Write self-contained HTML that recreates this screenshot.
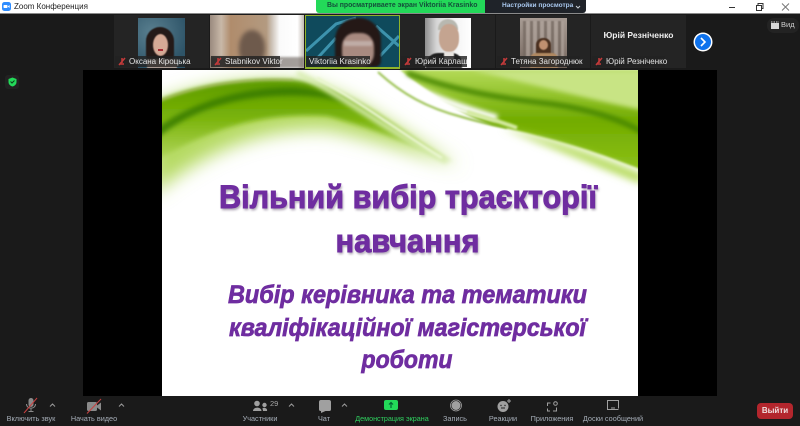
<!DOCTYPE html>
<html lang="uk"><head><meta charset="utf-8"><title>Zoom</title>
<style>
*{box-sizing:border-box}
html,body{margin:0;padding:0;width:800px;height:426px;overflow:hidden;background:#1a1a1a;font-family:"Liberation Sans",sans-serif}
.a{position:absolute}
.t{position:absolute;top:15px;height:53px;background:#242424;overflow:hidden}
.n{position:absolute;left:1px;bottom:1px;height:11px;background:rgba(34,34,34,.82);color:#e4e4e4;font-size:8px;line-height:11px;padding:0 2px 0 14px;white-space:nowrap}
.n svg{position:absolute;left:3px;top:1px}
.l{position:absolute;top:414px;color:#a6aeb8;font-size:7.3px;line-height:10px;white-space:nowrap;transform:translateX(-50%)}
.p{filter:blur(.6px)}
</style></head><body>
<div class="a" style="left:0;top:0;width:800px;height:13px;background:#fff"></div>
<div class="a" style="left:0;top:13px;width:800px;height:1px;background:#8a8a8a"></div>
<svg class="a" style="left:2px;top:2px" width="9" height="9" viewBox="0 0 9 9"><rect width="9" height="9" rx="2.5" fill="#2d8cff"/><rect x="1.5" y="3" width="4" height="3" rx=".7" fill="#fff"/><path d="M6 4.2 7.6 3v3L6 4.8z" fill="#fff"/></svg>
<div class="a" style="left:14px;top:2px;font-size:8px;line-height:10px;color:#222;white-space:nowrap">Zoom Конференция</div>
<div class="a" style="left:316px;top:0;width:169px;height:13px;background:#23d959;border-radius:0 0 0 3px;color:#14503a;font-size:6.9px;font-weight:bold;line-height:12px;padding-left:11px;white-space:nowrap">Вы просматриваете экран Viktoriia Krasinko</div>
<div class="a" style="left:485px;top:0;width:101px;height:13px;background:#1f2329;border-radius:0 0 3px 0;color:#a9c8ee;font-size:6.55px;font-weight:bold;line-height:12px;padding-left:17px;white-space:nowrap">Настройки просмотра</div>
<svg class="a" style="left:575px;top:5px" width="6" height="4"><path d="M1 1 3 3 5 1" fill="none" stroke="#c8d0d8"/></svg>
<svg class="a" style="left:727px;top:2px" width="70" height="10" fill="none" stroke="#333"><path d="M2 5.5H8"/><rect x="29.5" y="3.5" width="5" height="5"/><path d="M31 3V1.5H36V6.500H35"/><path d="M55 1.500 62 8.500M62 1.500 55 8.500" stroke="#777"/></svg>

<!-- thumbnails -->
<div class="t" style="left:114px;width:95px">
 <div class="a" style="left:24px;top:3px;width:47px;height:50px;background:radial-gradient(circle at 30% 30%,#5a8090,#2e5468 75%)"></div>
 <div class="a p" style="left:32px;top:12px;width:28px;height:36px;background:#241a18;border-radius:14px 14px 8px 8px"></div>
 <div class="a p" style="left:39px;top:19px;width:15px;height:22px;background:#d6aa96;border-radius:50%"></div>
 <div class="a" style="left:44px;top:34px;width:5px;height:2px;background:#a82c34"></div>
 <div class="a p" style="left:33px;top:44px;width:30px;height:9px;background:#ccb0a0"></div>
 <div class="n" style="width:75px"><svg width="9" height="9" fill="none" stroke="#c43a3a" stroke-width="1.500"><path d="M4 1v5M2 7h4M7 1 1 8"/></svg>Оксана Кіроцька</div>
</div>
<div class="t" style="left:210px;width:94px;background:linear-gradient(90deg,#9a8a7e 0,#c8b8a8 12%,#b08c6c 22%,#b39a80 60%,#cdc3b8 66%,#fafafa 74%,#fff 93%,#c0b8b0)">
 <div class="a" style="left:29px;top:15px;width:26px;height:34px;background:#6e5a4c;border-radius:50% 50% 40% 40%;filter:blur(2px)"></div>
 <div class="a" style="left:0;top:42px;width:94px;height:11px;background:#5a504a;opacity:.55;filter:blur(1px)"></div>
 <div class="n" style="width:69px"><svg width="9" height="9" fill="none" stroke="#c43a3a" stroke-width="1.500"><path d="M4 1v5M2 7h4M7 1 1 8"/></svg>Stabnikov Viktor</div>
</div>
<div class="t" style="left:305px;width:95px;background:#0f4a5c;border:1px solid #8fb32a">
 <svg class="a" style="left:0;top:0" width="93" height="51" fill="none" stroke="#3d93ad" stroke-width="3"><path d="M0 35 30 8 50 2M6 48 30 22 M70 10 93 30M74 40 93 20"/></svg>
 <div class="a" style="left:29px;top:2px;width:46px;height:49px;background:#241816;border-radius:22px 22px 6px 6px;filter:blur(1px)"></div>
 <div class="a" style="left:36px;top:17px;width:32px;height:34px;background:#a88a80;border-radius:40%;filter:blur(1px)"></div>
 <div class="a" style="left:38px;top:25px;width:28px;height:5px;background:#d0c4c0;opacity:.6;filter:blur(1px)"></div>
 <div class="n" style="left:0;bottom:0;width:64px;padding-left:3px">Viktoriia Krasinko</div>
</div>
<div class="t" style="left:400px;width:95px">
 <div class="a" style="left:25px;top:3px;width:46px;height:50px;background:linear-gradient(90deg,#8f8f8f,#d5d5d5 25%,#f0f0f0 55%,#fff)"></div>
 <div class="a p" style="left:38px;top:4px;width:20px;height:11px;background:#b8b8b0;border-radius:10px 10px 0 0"></div>
 <div class="a p" style="left:39px;top:9px;width:20px;height:28px;background:#c4a490;border-radius:45%"></div>
 <div class="a p" style="left:26px;top:38px;width:36px;height:15px;background:#1e1e1e;border-radius:12px 10px 0 0"></div>
 <div class="a p" style="left:44px;top:37px;width:10px;height:8px;background:#e8e4e0"></div>
 <div class="n" style="width:66px"><svg width="9" height="9" fill="none" stroke="#c43a3a" stroke-width="1.500"><path d="M4 1v5M2 7h4M7 1 1 8"/></svg>Юрий Карлаш</div>
</div>
<div class="t" style="left:496px;width:94px">
 <div class="a" style="left:24px;top:3px;width:47px;height:50px;background:linear-gradient(#a89c94,#8a7c74 60%,#6e6058)"></div>
 <div class="a p" style="left:27px;top:6px;width:41px;height:36px;background:repeating-linear-gradient(90deg,#746860 0 3px,#b0a49c 3px 7px);opacity:.7"></div>
 <div class="a p" style="left:40px;top:23px;width:15px;height:30px;background:#4a3020;border-radius:7px 7px 0 0"></div>
 <div class="a p" style="left:43px;top:25px;width:9px;height:10px;background:#c09070;border-radius:50%"></div>
 <div class="a p" style="left:34px;top:38px;width:28px;height:15px;background:#b08860;border-radius:6px 6px 0 0"></div>
 <div class="n" style="width:83px"><svg width="9" height="9" fill="none" stroke="#c43a3a" stroke-width="1.500"><path d="M4 1v5M2 7h4M7 1 1 8"/></svg>Тетяна Загороднюк</div>
</div>
<div class="t" style="left:591px;width:95px;color:#f0f0f0;font-size:8.5px;font-weight:bold;text-align:center;line-height:53px">
 <div class="a" style="left:0;top:-6px;width:95px">Юрій Резніченко</div>
 <div class="n" style="width:73px;font-weight:normal;text-align:left"><svg width="9" height="9" fill="none" stroke="#c43a3a" stroke-width="1.500"><path d="M4 1v5M2 7h4M7 1 1 8"/></svg>Юрій Резніченко</div>
</div>
<svg class="a" style="left:693px;top:32px" width="20" height="20"><circle cx="10" cy="10" r="9.500" fill="#fff"/><circle cx="10" cy="10" r="8" fill="#0e72ed"/><path d="M8 6 12 10 8 14" fill="none" stroke="#fff" stroke-width="1.600"/></svg>
<div class="a" style="left:767px;top:18px;width:32px;height:15px;background:#232323;border-radius:7px"></div>
<svg class="a" style="left:771px;top:21px" width="9" height="8"><rect y="2" width="8" height="6" fill="#d8d8d8"/><path d="M0 1H8" stroke="#d8d8d8" stroke-dasharray="1.500 1"/></svg>
<div class="a" style="left:781px;top:20px;font-size:7.5px;line-height:10px;color:#d0d0d0">Вид</div>
<div class="a" style="left:5px;top:75px;width:14px;height:14px;background:#222;border-radius:3px"></div>
<svg class="a" style="left:8px;top:77px" width="9" height="10"><path d="M4.500 .5 8.500 2V5C8.500 7.500 6.500 9 4.500 9.500 2.500 9 .5 7.500 .5 5V2z" fill="#23d959"/><path d="M2.500 4.500 4 6 6.500 3.500" fill="none" stroke="#0b3d1c"/></svg>

<!-- slide -->
<div class="a" style="left:83px;top:70px;width:634px;height:326px;background:#000"></div>
<svg class="a" style="left:162px;top:70px" width="476" height="326" viewBox="0 0 476 326">
 <defs>
  <filter id="b0" x="-20%" y="-40%" width="140%" height="180%"><feGaussianBlur stdDeviation="9"/></filter>
  <filter id="b1" x="-20%" y="-40%" width="140%" height="180%"><feGaussianBlur stdDeviation="4"/></filter>
  <filter id="b2" x="-20%" y="-40%" width="140%" height="180%"><feGaussianBlur stdDeviation="2.500"/></filter>
  <filter id="b3" x="-20%" y="-40%" width="140%" height="180%"><feGaussianBlur stdDeviation="1"/></filter>
  <filter id="s" x="-5%" y="-20%" width="110%" height="140%"><feGaussianBlur stdDeviation="1.200"/></filter>
  <linearGradient id="lg" x1="0" y1="0" x2="0" y2="1"><stop offset="0" stop-color="#5c9a00"/><stop offset=".45" stop-color="#78b208"/><stop offset="1" stop-color="#b4d860"/></linearGradient>
  <linearGradient id="rg" x1="0" y1="0" x2="0" y2="1"><stop offset="0" stop-color="#b4da58"/><stop offset=".5" stop-color="#72ac00"/><stop offset="1" stop-color="#8cc018"/></linearGradient>
  <clipPath id="cp"><rect width="476" height="326"/></clipPath>
 </defs>
 <rect width="476" height="326" fill="#fff"/>
 <g clip-path="url(#cp)">
  <path d="M-10 35C40 14 90 10 131 12C190 18 240 66 298 95C262 88 225 72 165 60C100 58 45 80 -10 125Z" fill="#b6da64" filter="url(#b0)"/>
  <path d="M-5 31C40 12 90 8 131 10C190 15 240 66 292 92C262 82 220 60 165 46C100 42 50 58 -5 90Z" fill="url(#lg)" filter="url(#b2)"/>
  <path d="M-5 58C30 32 80 17 131 17C155 18 170 25 185 33C160 25 130 24 100 27C60 31 25 44 -5 68Z" fill="#387a00" opacity=".85" filter="url(#b2)"/>
  <path d="M-5 32C40 13 90 8 131 10" fill="none" stroke="#a8b060" stroke-width="1" filter="url(#b3)"/>
  <path d="M135 3C180 25 240 70 285 92" fill="none" stroke="#d8edb0" stroke-width="5" filter="url(#b2)"/>
  <path d="M155 8C195 30 235 60 280 88" fill="none" stroke="#eaf6d0" stroke-width="3" filter="url(#b3)"/>
  <path d="M238 0H480V100C440 84 400 70 330 55C300 45 270 25 238 0Z" fill="url(#rg)" filter="url(#b3)"/>
  <path d="M340 58C400 72 440 88 480 104V114C440 98 390 78 340 58Z" fill="#b4da58" filter="url(#b1)"/>
  <path d="M310 0H480V40C430 30 370 14 310 0Z" fill="#c8e484" filter="url(#b2)"/>
  <path d="M245 3C290 20 335 28 390 34C430 40 460 50 480 62" fill="none" stroke="#468600" stroke-width="5" filter="url(#b2)"/>
  <path d="M205 -2C245 22 280 32 330 50C285 40 240 20 215 0Z" fill="#fff" filter="url(#b3)"/>
  <path d="M220 0C250 20 290 35 335 48" fill="none" stroke="#fff" stroke-width="7" filter="url(#b2)"/>
  <path d="M216 2C240 24 265 38 300 47C320 53 335 56 345 58" fill="none" stroke="#6ca400" stroke-width="1.500" filter="url(#b3)"/>
  <path d="M305 42C325 48 340 52 355 58" fill="none" stroke="#d4eaa0" stroke-width="4" filter="url(#b3)"/>
 </g>
 <g font-family="'Liberation Sans',sans-serif" font-weight="bold" text-anchor="middle">
  <g fill="#5b4a68" opacity=".55" filter="url(#s)" font-size="32">
   <text x="247" y="140" textLength="378" lengthAdjust="spacingAndGlyphs">Вільний вибір траєкторії</text>
   <text x="246.500" y="184" textLength="144" lengthAdjust="spacingAndGlyphs">навчання</text>
  </g>
  <g fill="#6f2da0" stroke="#6f2da0" stroke-width=".9" font-size="32">
   <text x="246" y="138" textLength="378" lengthAdjust="spacingAndGlyphs">Вільний вибір траєкторії</text>
   <text x="245.500" y="182" textLength="144" lengthAdjust="spacingAndGlyphs">навчання</text>
  </g>
  <g fill="#6f2da0" stroke="#6f2da0" stroke-width=".7" font-size="25" font-style="italic">
   <text x="245.500" y="233" textLength="359" lengthAdjust="spacingAndGlyphs">Вибір керівника та тематики</text>
   <text x="245.500" y="266" textLength="357" lengthAdjust="spacingAndGlyphs">кваліфікаційної магістерської</text>
   <text x="245" y="298" textLength="91" lengthAdjust="spacingAndGlyphs">роботи</text>
  </g>
 </g>
</svg>
<div class="a" style="left:305px;top:68px;width:95px;height:1px;background:#8fb32a"></div>

<!-- toolbar -->
<div class="a" style="left:0;top:396px;width:800px;height:30px;background:#1a1a1a"></div>
<svg class="a" style="left:0;top:396px" width="800" height="30" fill="none">
 <rect x="28.500" y="2" width="5" height="9" rx="2.500" fill="#8a8a8a"/>
 <path d="M26.500 8C26.500 13.500 35.500 13.500 35.500 8M31 12.500V15M28.500 15.500H33.500" stroke="#8a8a8a"/>
 <path d="M37 2 24 17" stroke="#c84040"/>
 <path d="M50 10.500 52.500 8 55 10.500M119 10.500 121.500 8 124 10.500M289 10.500 291.500 8 294 10.500M342 10.500 344.500 8 347 10.500" stroke="#9a9a9a"/>
 <rect x="87" y="6" width="10" height="9" rx="1.500" fill="#8a8a8a"/><path d="M97 9.500 101 6.500V14.500L97 11.500Z" fill="#8a8a8a"/><path d="M101 3 87 17.500" stroke="#c84040"/>
 <circle cx="257" cy="7.500" r="2.800" fill="#a0a0a0"/><path d="M253 15C253 10.500 261.500 10.500 261.500 15Z" fill="#a0a0a0"/><circle cx="264.500" cy="9" r="2.200" fill="#a0a0a0"/><path d="M262.500 12C266 11.500 267.500 13 267 15H263Z" fill="#a0a0a0"/>
 <path d="M321 4H329C330.500 4 331 5 331 6V13C331 14.500 330.500 15 329 15H325.500L321 17V15C319.500 15 319 14.500 319 13V6C319 5 319.500 4 321 4Z" fill="#a0a0a0"/>
 <rect x="384" y="4" width="14" height="10" rx="2" fill="#23d959"/><path d="M391 12V7M389 8.500 391 6.500 393 8.500" stroke="#063" stroke-width="1.200"/>
 <circle cx="456" cy="9.500" r="5.500" stroke="#a0a0a0" stroke-width=".8"/><circle cx="456" cy="9.500" r="4.500" fill="#a0a0a0"/>
 <circle cx="503" cy="10.500" r="5.500" fill="#a0a0a0"/><circle cx="501" cy="9.500" r=".7" fill="#222"/><circle cx="505" cy="9.500" r=".7" fill="#222"/><path d="M501 12H505" stroke="#222"/><path d="M509 3V7M507 5H511" stroke="#a0a0a0"/>
 <path d="M547.500 10V7H550.500M553 15H556.500V11.500M547.500 12.500V15H550" stroke="#a0a0a0"/><circle cx="555.500" cy="7.500" r="1.800" stroke="#a0a0a0"/>
 <path d="M607.500 14V4.500H618.500V12.500" stroke="#a0a0a0"/><path d="M607 13.500H618.500M611 12H615" stroke="#a0a0a0"/>
</svg>
<div class="l" style="left:31px">Включить звук</div>
<div class="l" style="left:94px">Начать видео</div>
<div class="a" style="left:270px;top:399px;font-size:7.500px;line-height:10px;color:#a8a8a8">29</div>
<div class="l" style="left:260px">Участники</div>
<div class="l" style="left:324px">Чат</div>
<div class="l" style="left:392px;color:#2fd05f;font-size:7.2px">Демонстрация экрана</div>
<div class="l" style="left:455px">Запись</div>
<div class="l" style="left:503px">Реакции</div>
<div class="l" style="left:552px">Приложения</div>
<div class="l" style="left:613px">Доски сообщений</div>
<div class="a" style="left:757px;top:403px;width:36px;height:16px;background:#b3262d;border-radius:4px;color:#f0e0e0;font-size:8px;font-weight:bold;text-align:center;line-height:16px">Выйти</div>
</body></html>
